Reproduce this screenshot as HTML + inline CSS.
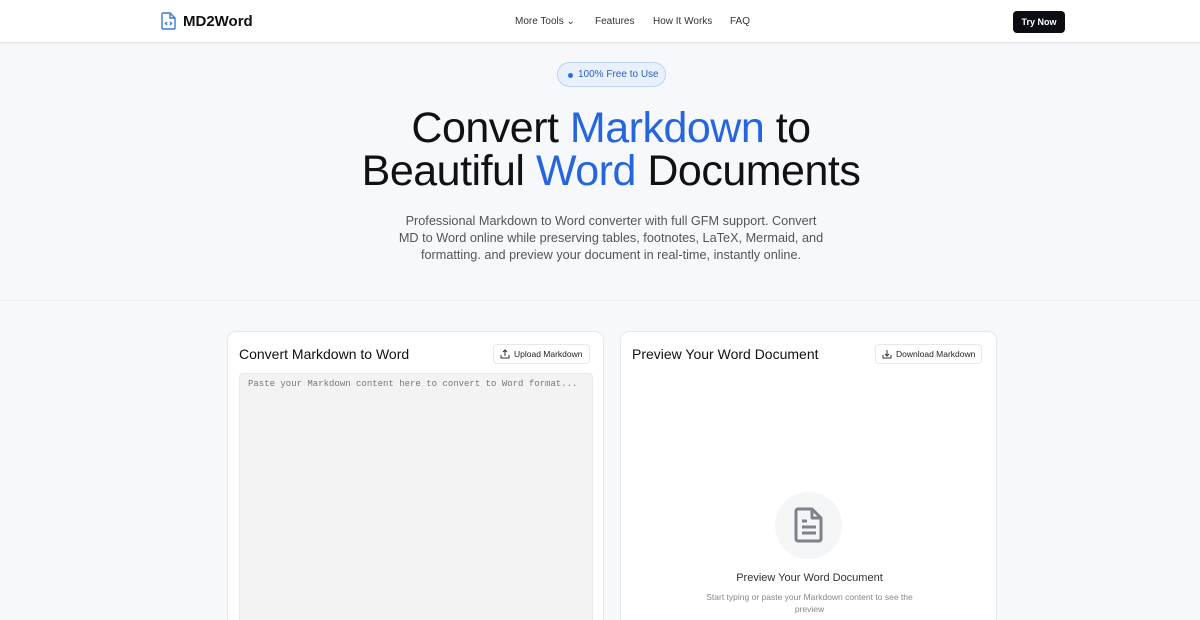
<!DOCTYPE html>
<html><head><meta charset="utf-8"><style>
*{box-sizing:border-box;margin:0;padding:0}
html,body{width:1200px;height:620px;overflow:hidden}
body{font-family:"Liberation Sans",sans-serif;background:#f6f8fb;color:#111;position:relative}
.hdr{height:43px;background:#fff;border-bottom:1px solid #e3e5e8;box-shadow:0 1px 3px rgba(0,0,0,.05);position:relative}
.logo{position:absolute;left:161px;top:12px;display:flex;align-items:center;gap:7px;font-weight:bold;font-size:15px}
.nav{position:absolute;top:16px;font-size:10px;color:#333}
.btn{position:absolute;left:1013px;top:11px;width:52px;height:22px;background:#0b0d12;color:#fff;border-radius:4px;font-size:9px;font-weight:bold;text-align:center;line-height:22px}
.badge{position:absolute;left:557px;top:62px;width:109px;height:25px;border:1px solid #bcd3f2;background:#e8f0fc;border-radius:13px;font-size:10px;color:#2a5fc4;line-height:24px;padding-left:20px}
.badge:before{content:"";position:absolute;left:10px;top:10px;width:5px;height:5px;border-radius:50%;background:#2f6be0}
h1{position:absolute;left:11px;width:1200px;top:107px;text-align:center;font-size:43px;font-weight:normal;line-height:43px;letter-spacing:-.5px;color:#111}
h1 span{color:#2565dd}
.sub{position:absolute;left:392px;width:438px;top:213px;text-align:center;font-size:12.7px;line-height:17px;color:#555}
.sec{position:absolute;top:300px;left:0;width:1200px;height:320px;background:#f7f8fa;border-top:1px solid #eef0f3}
.card{position:absolute;top:331px;height:300px;background:#fff;border:1px solid #e6e8eb;border-radius:9px}
.ct{position:absolute;left:11px;top:14px;font-size:14px;color:#111}
.sb{position:absolute;top:12px;height:20px;border:1px solid #e6e8eb;border-radius:4px;font-size:8.5px;line-height:18px;padding:0 6px 0 20px;color:#222}
.ta{position:absolute;left:11px;top:41px;width:354px;height:260px;background:#f3f3f4;border:1px solid #e9e9ea;border-radius:4px;font-family:"Liberation Mono",monospace;font-size:9px;color:#777;padding:5px 8px}
</style></head><body>
<div class="hdr">
<div class="logo"><svg width="15" height="18" viewBox="0 0 15 18" fill="none" stroke="#3b78d8" stroke-width="1.4"><path d="M2 1h7l5 5v10a1 1 0 0 1-1 1H2a1 1 0 0 1-1-1V2a1 1 0 0 1 1-1z"/><path d="M9 1v5h5"/><path d="M6 10l-1.5 1.5L6 13M9 10l1.5 1.5L9 13"/></svg>MD2Word</div>
<div class="nav" style="left:515px">More Tools ⌄</div>
<div class="nav" style="left:595px">Features</div>
<div class="nav" style="left:653px">How It Works</div>
<div class="nav" style="left:730px">FAQ</div>
<div class="btn">Try Now</div>
</div>
<div class="badge">100% Free to Use</div>
<h1>Convert <span>Markdown</span> to<br>Beautiful <span>Word</span> Documents</h1>
<div class="sub">Professional Markdown to Word converter with full GFM support. Convert<br>MD to Word online while preserving tables, footnotes, LaTeX, Mermaid, and<br>formatting. and preview your document in real-time, instantly online.</div>
<div class="sec"></div>
<div class="card" style="left:227px;width:377px">
<div class="ct">Convert Markdown to Word</div>
<div class="sb" style="left:265px"><svg style="position:absolute;left:6px;top:4px" width="10" height="10" viewBox="0 0 10 10" fill="none" stroke="#333" stroke-width="1"><path d="M5 7V1M3 3l2-2 2 2M1 6v3h8V6"/></svg>Upload Markdown</div>
<div class="ta">Paste your Markdown content here to convert to Word format...</div>
</div>
<div class="card" style="left:620px;width:377px">
<div class="ct">Preview Your Word Document</div>
<div class="sb" style="left:254px"><svg style="position:absolute;left:6px;top:4px" width="10" height="10" viewBox="0 0 10 10" fill="none" stroke="#333" stroke-width="1"><path d="M5 1v6M3 5l2 2 2-2M1 6v3h8V6"/></svg>Download Markdown</div>
<div style="position:absolute;left:154px;top:160px;width:67px;height:67px;border-radius:50%;background:#f4f5f7"></div>
<svg style="position:absolute;left:173px;top:175px" width="30" height="36" viewBox="0 0 30 36" fill="none" stroke="#7d828b" stroke-width="3" stroke-linejoin="round"><path d="M4 2h14l9 9v21a2 2 0 0 1-2 2H4a2 2 0 0 1-2-2V4a2 2 0 0 1 2-2z"/><path d="M18 2v9h9M8 14h5M8 20h14M8 26h14"/></svg>
<div style="position:absolute;left:0;width:377px;top:240px;text-align:center;font-size:11px;color:#333">Preview Your Word Document</div>
<div style="position:absolute;left:70px;width:237px;top:259px;text-align:center;font-size:8.5px;line-height:12px;color:#888">Start typing or paste your Markdown content to see the preview</div>
</div>
</body></html>
